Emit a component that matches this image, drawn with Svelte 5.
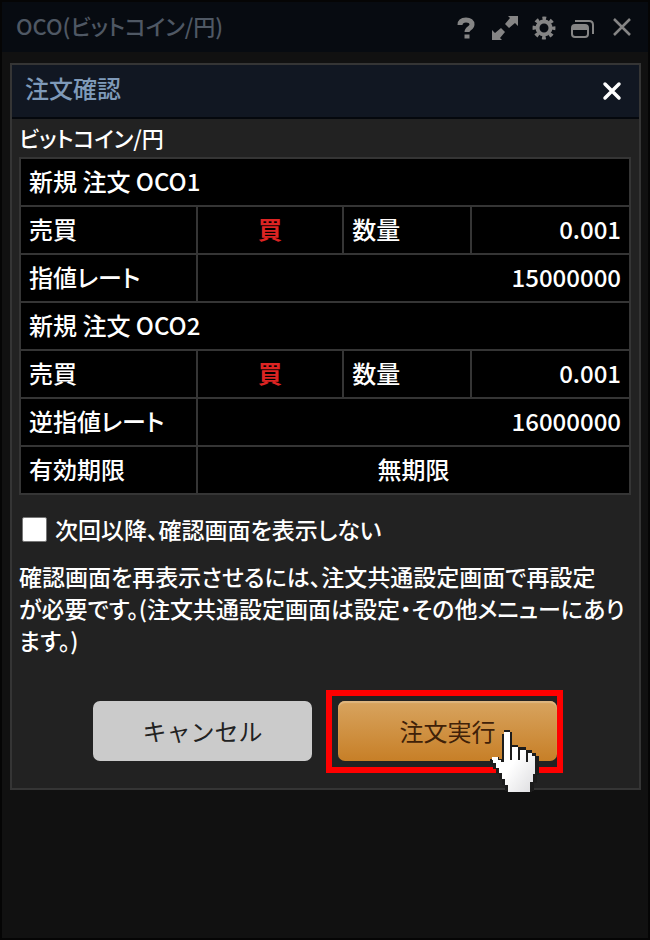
<script>
  // 注文確認ダイアログ(OCO)
  const symbol = "ビットコイン/円";

  const orders = [
    { title: "新規 注文 OCO1", side: "買", amount: "0.001", rateLabel: "指値レート", rate: "15000000" },
    { title: "新規 注文 OCO2", side: "買", amount: "0.001", rateLabel: "逆指値レート", rate: "16000000" }
  ];

  let skipConfirm = false;
</script>

<main class="window">
  <header class="window-bar">
    <h1>OCO({symbol})</h1>
    <div class="tools">
      <button aria-label="ヘルプ">
        <svg width="28" height="28" viewBox="0 0 28 28" fill="none" stroke="currentColor" stroke-width="5">
          <path d="M8 11C8 7 11 6 14 6c4 0 6 2 6 4.500c0 4-5 3.500-5 7.500" />
          <path d="M12.500 20.500h5v4h-5z" fill="currentColor" stroke="none" />
        </svg>
      </button>
      <button aria-label="拡大">
        <svg width="28" height="28" viewBox="0 0 28 28" fill="currentColor">
          <path d="M17 2h10v10l-3-3-6 5-4-4 5-6zM1 16l3 3 6-5 4 4-5 6 2 2H1z" />
        </svg>
      </button>
      <button aria-label="設定">
        <svg width="28" height="28" viewBox="0 0 28 28" fill="none" stroke="currentColor">
          <circle cx="14" cy="14" r="6.500" stroke-width="4" />
          <circle cx="14" cy="14" r="9.700" stroke-width="3.500" stroke-dasharray="3.800 3.818" stroke-dashoffset="1.900" />
        </svg>
      </button>
      <button aria-label="別ウィンドウ">
        <svg width="28" height="28" viewBox="0 0 28 28" fill="none" stroke="currentColor" stroke-width="2">
          <rect x="3" y="11" width="16" height="12" rx="3" />
          <path d="M3 14h16" stroke-width="4" />
          <path d="M6 7h14q4 0 4 4v9" />
        </svg>
      </button>
      <button aria-label="閉じる">
        <svg width="28" height="28" viewBox="0 0 28 28" stroke="currentColor" stroke-width="2.500">
          <path d="M6 5l16 16M22 5L6 21" />
        </svg>
      </button>
    </div>
  </header>

  <section class="dialog" role="dialog" aria-labelledby="dialog-title">
    <header class="dialog-bar">
      <h2 id="dialog-title">注文確認</h2>
      <button class="close" aria-label="ダイアログを閉じる">
        <svg width="20" height="20" viewBox="0 0 20 20" stroke="currentColor" stroke-width="3.500" stroke-linecap="round">
          <path d="M3 3l14 14M17 3L3 17" />
        </svg>
      </button>
    </header>

    <div class="content">
      <p class="symbol">{symbol}</p>

      <table>
        <colgroup>
          <col class="c-label" />
          <col class="c-side" />
          <col class="c-amount" />
          <col />
        </colgroup>
        <tbody>
          {#each orders as order}
            <tr>
              <th colspan="4">{order.title}</th>
            </tr>
            <tr>
              <th>売買</th>
              <td class="buy">{order.side}</td>
              <th>数量</th>
              <td class="num">{order.amount}</td>
            </tr>
            <tr>
              <th>{order.rateLabel}</th>
              <td class="num" colspan="3">{order.rate}</td>
            </tr>
          {/each}
          <tr>
            <th>有効期限</th>
            <td class="center" colspan="3">無期限</td>
          </tr>
        </tbody>
      </table>

      <label class="skip">
        <input type="checkbox" bind:checked={skipConfirm} />
        次回以降、確認画面を表示しない
      </label>

      <p class="note">
        確認画面を再表示させるには、注文共通設定画面で再設定<br />が必要です。(注文共通設定画面は設定・その他メニューにあります。)
      </p>

      <div class="actions">
        <button class="btn cancel">キャンセル</button>
        <div class="target">
          <button class="btn submit">注文実行</button>
          <span class="frame"></span>
          <svg class="pointer" width="52" height="62" viewBox="0 0 52 62" shape-rendering="crispEdges">
            <defs>
              <linearGradient id="hand" x1="0" y1="0" x2="1" y2="1">
                <stop offset="0.500" stop-color="#ffffff" />
                <stop offset="1" stop-color="#dcdcdf" />
              </linearGradient>
            </defs>
            <path
              fill="#1c1c1c"
              d="M15 0h6v2h2v13h6v2h8v3h6v3h4v3h3v19h-2v8h-3v8h-2v1H18v-1h-2v-6h-3v-6h-3v-5H7v-5H4v-4H1v-6h2v-2h7v2h3v-25h2z"
            />
            <path
              fill="url(#hand)"
              d="M15 2h6v28h2V17h6v13h2V20h6v12h2V23h4v3h3v18h-2v8h-3v10H19v-7h-3v-6h-3v-6h-3v-5H7v-5H4v-3H3v-3h6v3h3v2h3z"
            />
          </svg>
        </div>
      </div>
    </div>
  </section>
</main>

<style>
  :global(body) {
    background: #111;
  }

  .window {
    box-sizing: border-box;
    min-height: 100vh;
    border: 2px solid #050505;
    background: #111;
    color: #fff;
    font-family: "Noto Sans CJK JP", sans-serif;
    font-size: 24px;
    font-weight: 500;
    line-height: 32px;
    font-feature-settings: "palt";
  }

  h1,
  h2,
  p {
    margin: 0;
    font-size: 24px;
    font-weight: 500;
  }

  button {
    padding: 0;
    border: none;
    background: none;
    color: inherit;
    font: inherit;
    cursor: pointer;
  }

  svg {
    display: block;
  }

  .window-bar {
    display: flex;
    align-items: center;
    justify-content: space-between;
    height: 50px;
    padding: 0 12px 0 14px;
    background: #070b11;
  }

  .window-bar h1 {
    padding-bottom: 4px;
    color: #4f5864;
    font-size: 22px;
  }

  .tools {
    display: flex;
    gap: 11px;
    padding-top: 2px;
    color: #858585;
  }

  .dialog {
    margin: 11px 7px 0 8px;
    border: 2px solid #353535;
    background: #222;
  }

  .dialog-bar {
    display: flex;
    align-items: center;
    justify-content: space-between;
    height: 52px;
    padding: 0 17px 0 13px;
    border-bottom: 2px solid #05080d;
    background: #111722;
  }

  .dialog-bar h2 {
    padding-bottom: 6px;
    color: #7f9ab9;
  }

  .content {
    padding: 2px 8px 27px 7px;
  }

  .symbol {
    padding-bottom: 4px;
    font-size: 22px;
  }

  table {
    width: 100%;
    border-collapse: collapse;
    table-layout: fixed;
    background: #000;
  }

  .c-label {
    width: 29%;
  }

  .c-side {
    width: 24%;
  }

  .c-amount {
    width: 21%;
  }

  th,
  td {
    box-sizing: border-box;
    height: 48px;
    padding: 0 8px 2px;
    border: 2px solid #353535;
    font-weight: 500;
    text-align: left;
  }

  .num {
    text-align: right;
  }

  .center,
  .buy {
    text-align: center;
  }

  .buy {
    color: #dc2423;
    font-weight: 700;
  }

  .skip {
    display: flex;
    align-items: center;
    gap: 8px;
    margin: 18px 0 15px 3px;
    font-size: 23px;
  }

  .skip input {
    appearance: none;
    width: 25px;
    height: 25px;
    margin: 0;
    border: 1px solid #777;
    border-radius: 2px;
    background: #fff;
  }

  .skip input:checked {
    background: #2f7fe0;
  }

  .note {
    font-size: 23px;
  }

  .actions {
    display: flex;
    justify-content: center;
    gap: 26px;
    margin-top: 45px;
  }

  .btn {
    width: 219px;
    height: 60px;
    border-radius: 7px;
    color: #222;
    font-weight: 400;
    font-feature-settings: normal;
  }

  .cancel {
    background: #cbcbcb;
  }

  .submit {
    background: linear-gradient(#d8a45f, #c77f27);
    box-shadow: inset 0 2px 1px #dfb67f;
    color: #402108;
  }

  .target {
    position: relative;
  }

  .frame {
    position: absolute;
    inset: -11px -6px -12px -12px;
    border: 6px solid #f00;
    pointer-events: none;
  }

  .pointer {
    position: absolute;
    top: 29px;
    left: 151px;
    pointer-events: none;
  }
</style>
